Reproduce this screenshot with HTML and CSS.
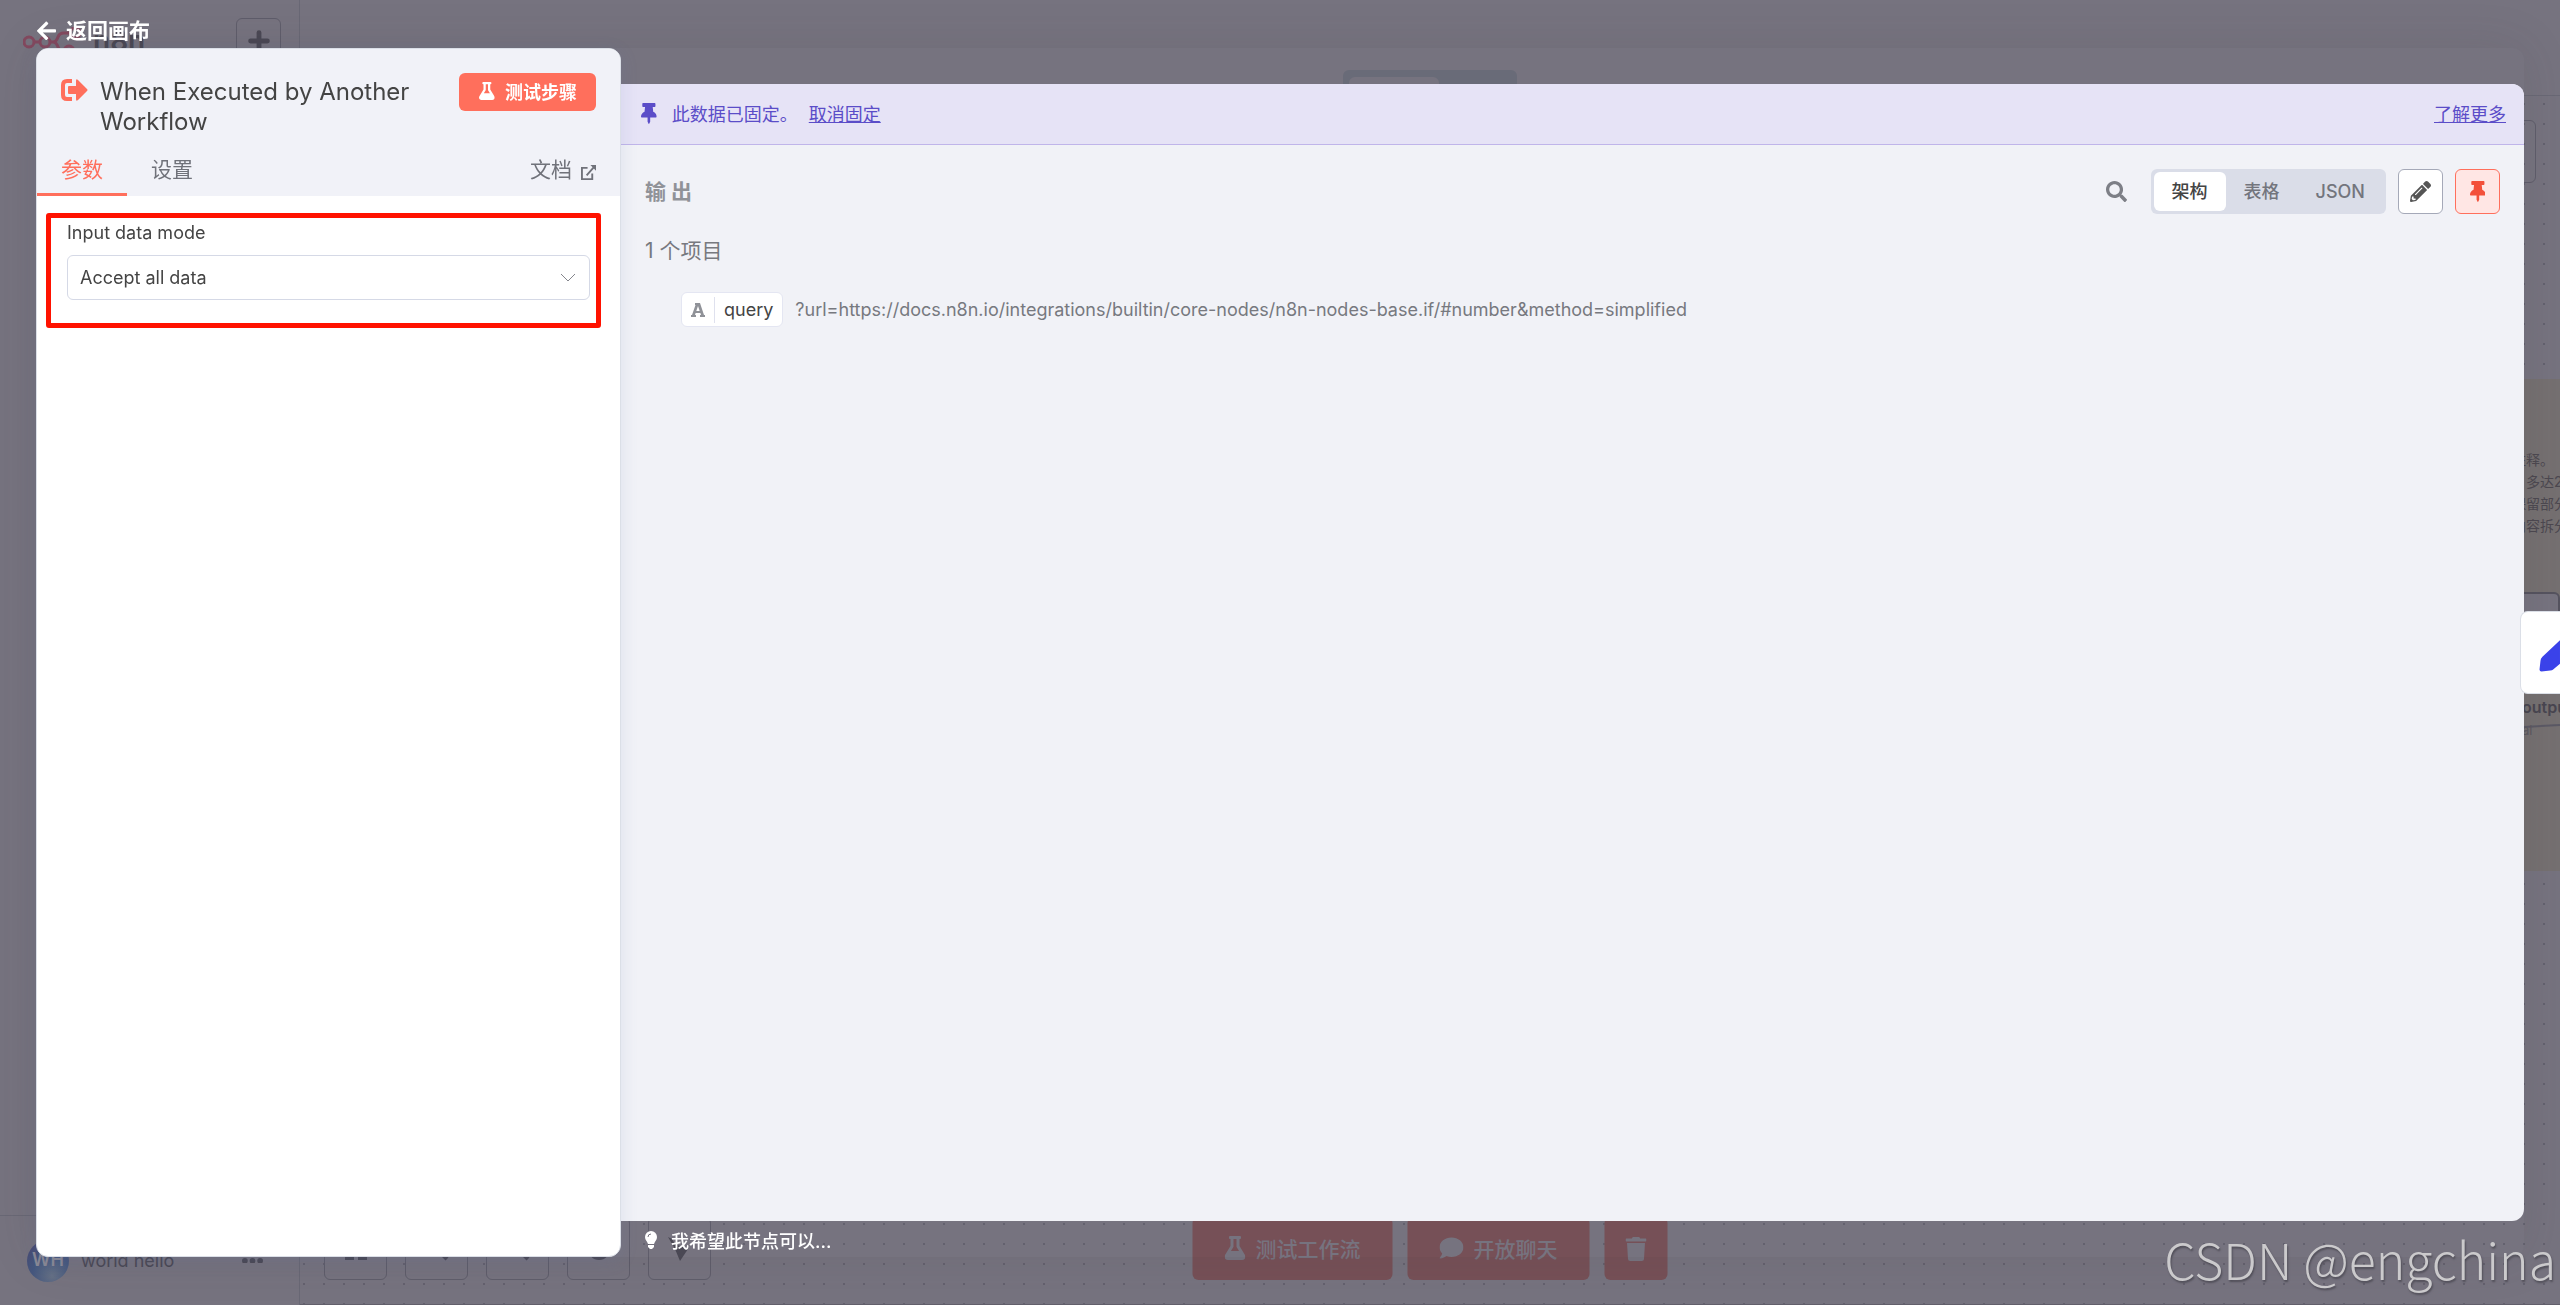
FILE: index.html
```
<!DOCTYPE html>
<html lang="zh-CN">
<head>
    <meta charset="UTF-8">
    <meta name="viewport" content="width=device-width, initial-scale=1.0">
    <title>n8n</title>
    <link rel="stylesheet" href="styles.css">
</head>
<body>
    <svg class="sprite" aria-hidden="true">
        <symbol id="flask" viewBox="0 0 448 512"><path d="M437.2 403.5L320 215V64h8c13.3 0 24-10.7 24-24V24c0-13.3-10.7-24-24-24H120c-13.3 0-24 10.7-24 24v16c0 13.3 10.7 24 24 24h8v151L10.8 403.5C-18.5 450.6 15.3 512 70.9 512h306.2c55.7 0 89.4-61.5 60.1-108.5zM137.9 320l48.2-77.6c3.7-5.2 5.8-11.6 5.8-18.4V64h64v160c0 6.9 2.2 13.2 5.8 18.4l48.2 77.6h-172z"/></symbol>
        <symbol id="pin" viewBox="0 0 384 512"><path d="M298 214.300L285.800 96H328c13.300 0 24-10.700 24-24V24c0-13.300-10.700-24-24-24H56C42.700 0 32 10.700 32 24v48c0 13.300 10.700 24 24 24h42.200L86 214.300C37.500 236.800 0 277.300 0 328c0 13.300 10.700 24 24 24h136v104c0 1.200.3 2.500.8 3.600l24 48c3 5.900 11.400 5.900 14.400 0l24-48c.5-1.100.8-2.400.8-3.600V352h136c13.300 0 24-10.700 24-24 0-51.200-38-91.400-86-113.700z"/></symbol>
    </svg>

    <div class="app">
        <aside class="sidebar">
            <div class="sidebar-top">
                <svg class="logo" viewBox="0 0 58 30" fill="none" stroke="currentColor" stroke-width="3">
                    <circle cx="6" cy="15" r="5"/>
                    <circle cx="22" cy="15" r="5"/>
                    <path d="M11 15h6M27 15h3c3 0 4-2 5-5s3-4 6-4h6M30 15c3 0 4 2 5 5s3 4 6 4"/>
                    <circle cx="52" cy="6" r="5"/>
                    <circle cx="46" cy="24" r="5"/>
                </svg>
                <span class="brand">n8n</span>
                <button class="add" aria-label="新建">
                    <svg viewBox="0 0 20 20" fill="none" stroke="currentColor" stroke-width="4" stroke-linecap="round"><path d="M10 3v14M3 10h14"/></svg>
                </button>
            </div>
            <div class="user">
                <span class="avatar">WH</span>
                <span class="user-name">world hello</span>
                <svg class="more" viewBox="0 0 22 6"><circle cx="3" cy="3" r="3"/><circle cx="11" cy="3" r="3"/><circle cx="19" cy="3" r="3"/></svg>
            </div>
        </aside>

        <main class="main">
            <header class="main-header">
                <div class="switcher"><span></span></div>
            </header>
            <div class="canvas">
                <div class="setup-card"></div>
                <div class="sticky">
                    <p>注释。</p>
                    <p>&#12288;多达2</p>
                    <p>保留部分</p>
                    <p>内容拆分</p>
                </div>
                <div class="frame"></div>
                <svg class="edge" viewBox="0 0 60 10" fill="none" stroke="currentColor" stroke-width="2"><path d="M0 8L24 6L60 4"/></svg>
                <div class="node-label">output</div>
                <div class="node-sub">al</div>
                <div class="node">
                    <svg viewBox="0 0 40 82"><path d="M40 29L22 46q-2 2-2 4l-1 9q0 2 2 2l9-1q2 0 3-1l7-6z"/></svg>
                </div>

                <div class="zoom-controls">
                    <button aria-label="适应视图"><svg viewBox="0 0 24 24"><path d="M1 1h9v4H5v5H1zM14 1h9v9h-4V5h-5zM1 14h4v5h5v4H1zM19 14h4v9h-9v-4h5z"/></svg></button>
                    <button aria-label="放大"><svg viewBox="0 0 24 24" fill="none" stroke="currentColor" stroke-width="4"><circle cx="9" cy="9" r="7"/><path d="M14 14l8 8"/></svg></button>
                    <button aria-label="缩小"><svg viewBox="0 0 24 24" fill="none" stroke="currentColor" stroke-width="4"><circle cx="9" cy="9" r="7"/><path d="M14 14l8 8"/></svg></button>
                    <button aria-label="重置"><svg viewBox="0 0 24 24"><circle cx="12" cy="12" r="11"/></svg></button>
                    <button aria-label="整理"><svg viewBox="0 0 24 24"><path d="M0 0l4 2 3 5 13 5-8 12L7 12z"/></svg></button>
                </div>

                <div class="run-controls">
                    <button><svg viewBox="0 0 448 512"><use href="#flask"/></svg>测试工作流</button>
                    <button><svg viewBox="0 0 512 512"><path d="M256 32C114.600 32 0 125.100 0 240c0 49.600 21.400 95 57 130.700C44.500 421.100 2.700 466 2.200 466.500c-2.200 2.300-2.800 5.700-1.500 8.700S4.800 480 8 480c66.300 0 116-31.800 140.600-51.400 32.700 12.300 69 19.400 107.400 19.400 141.400 0 256-93.100 256-208S397.400 32 256 32z"/></svg>开放聊天</button>
                    <button aria-label="删除"><svg viewBox="0 0 448 512"><path d="M432 32H312l-9.400-18.700A24 24 0 0 0 281.100 0H166.800a23.700 23.700 0 0 0-21.400 13.300L136 32H16A16 16 0 0 0 0 48v32a16 16 0 0 0 16 16h416a16 16 0 0 0 16-16V48a16 16 0 0 0-16-16zM53.200 467a48 48 0 0 0 47.900 45h245.800a48 48 0 0 0 47.900-45L416 128H32z"/></svg></button>
                </div>
            </div>
        </main>
    </div>

    <a class="back" href="#">
        <svg viewBox="0 0 448 512"><path d="M257.500 445.100l-22.200 22.200c-9.400 9.400-24.600 9.400-33.900 0L7 273c-9.400-9.400-9.400-24.600 0-33.900L201.400 44.700c9.400-9.400 24.600-9.400 33.900 0l22.200 22.200c9.500 9.500 9.300 25-.4 34.300L136.600 216H424c13.300 0 24 10.700 24 24v32c0 13.300-10.700 24-24 24H136.600l120.500 114.800c9.800 9.300 10 24.800.4 34.300z"/></svg>
        返回画布
    </a>

    <div class="ndv">
        <section class="params">
            <div class="params-header">
                <div class="title-row">
                    <svg class="node-icon" viewBox="0 0 27 22">
                        <path d="M11 2H6Q2 2 2 6v10q0 4 4 4h5" fill="none" stroke="currentColor" stroke-width="4"/>
                        <path d="M8 7h7V2q0-3 2-1l9 9q1 1 0 2l-9 9q-2 2-2-1v-5H8q-1 0-1-1V8q0-1 1-1z"/>
                    </svg>
                    <h1>When Executed by Another Workflow</h1>
                    <button class="test-step"><svg viewBox="0 0 448 512"><use href="#flask"/></svg>测试步骤</button>
                </div>
                <nav class="tabs">
                    <a class="tab active" href="#">参数</a>
                    <a class="tab" href="#">设置</a>
                    <a class="docs" href="#">文档
                        <svg viewBox="0 0 16 16" fill="none" stroke="currentColor" stroke-width="2"><path d="M7 3H1v12h11V9M6 11l8-9"/><path d="M10 0h6v6z" fill="currentColor" stroke="none"/></svg>
                    </a>
                </nav>
            </div>
            <div class="params-body">
                <div class="field">
                    <label for="mode">Input data mode</label>
                    <div class="select">
                        <select id="mode">
                            <option>Accept all data</option>
                        </select>
                        <svg viewBox="0 0 16 10" fill="none" stroke="currentColor"><path d="M1 1l7 7 7-7"/></svg>
                    </div>
                </div>
            </div>
        </section>

        <div class="right">
            <section class="output">
                <div class="pinned">
                    <svg viewBox="0 0 384 512"><use href="#pin"/></svg>
                    <span>此数据已固定。</span>
                    <a href="#">取消固定</a>
                    <a class="learn" href="#">了解更多</a>
                </div>
                <div class="output-header">
                    <h2>输出</h2>
                    <button class="search" aria-label="搜索"><svg viewBox="0 0 512 512"><path d="M505 442.700L405.300 343c-4.500-4.500-10.600-7-17-7H372c27.600-35.300 44-79.700 44-128C416 93.100 322.900 0 208 0S0 93.100 0 208s93.100 208 208 208c48.300 0 92.700-16.400 128-44v16.300c0 6.400 2.500 12.500 7 17l99.700 99.700c9.400 9.400 24.600 9.400 33.900 0l28.300-28.300c9.400-9.400 9.400-24.600.1-34zM208 336c-70.700 0-128-57.200-128-128 0-70.700 57.200-128 128-128 70.700 0 128 57.200 128 128 0 70.700-57.200 128-128 128z"/></svg></button>
                    <div class="views">
                        <label><input type="radio" name="view" checked><span>架构</span></label>
                        <label><input type="radio" name="view"><span>表格</span></label>
                        <label><input type="radio" name="view"><span>JSON</span></label>
                    </div>
                    <button class="square" aria-label="编辑"><svg viewBox="0 0 512 512"><path d="M497.900 142.100l-46.100 46.100c-4.700 4.700-12.300 4.700-17 0l-111-111c-4.700-4.700-4.700-12.300 0-17l46.100-46.100c18.700-18.700 49.100-18.700 67.900 0l60.100 60.100c18.800 18.700 18.800 49.100 0 67.900zM284.200 99.800L21.600 362.400.4 483.900c-2.900 16.400 11.400 30.600 27.800 27.800l121.500-21.300 262.600-262.600c4.700-4.700 4.700-12.300 0-17l-111-111c-4.800-4.700-12.400-4.700-17.100 0zM124.100 339.900c-5.500-5.500-5.500-14.300 0-19.800l154-154c5.500-5.500 14.300-5.500 19.800 0s5.500 14.300 0 19.800l-154 154c-5.500 5.500-14.300 5.500-19.800 0zM88 424h48v36.300l-64.500 11.300-31.100-31.100L51.700 376H88v48z"/></svg></button>
                    <button class="square on" aria-label="固定数据"><svg viewBox="0 0 384 512"><use href="#pin"/></svg></button>
                </div>
                <p class="count">1 个项目</p>
                <div class="schema-row">
                    <div class="pill">
                        <svg viewBox="0 0 14 14"><path d="M5 0h4l4 12h1v2H9v-2h1l-.6-2H4.600L4 12h1v2H0v-2h1L4.500 2H4V0zM5.300 8h3.400L7 3z"/></svg>
                        <span>query</span>
                    </div>
                    <span class="value">?url=https://docs.n8n.io/integrations/builtin/core-nodes/n8n-nodes-base.if/#number&amp;method=simplified</span>
                </div>
            </section>
            <a class="wish" href="#">
                <svg viewBox="0 0 12 18"><path d="M6 0a6 6 0 0 1 6 6c0 3-2 4-3 7H3C2 10 0 9 0 6a6 6 0 0 1 6-6zM3 14h6v2l-2 2H5l-2-2z"/><path d="M3 6q0-3 3-3" fill="none" stroke="#76737f"/></svg>
                我希望此节点可以...
            </a>
        </div>
    </div>

    <div class="watermark">CSDN @engchina</div>
</body>
</html>
```
FILE: styles.css
```
* {
    box-sizing: border-box;
}
body {
    margin: 0;
    height: 100vh;
    overflow: hidden;
    background: #76737f;
    color: #444;
    font-family: Inter, "Noto Sans CJK SC", sans-serif;
    font-size: 18px;
}
h1, h2, p {
    margin: 0;
}
a {
    color: inherit;
    text-decoration: none;
}
button {
    padding: 0;
    border: 0;
    background: none;
    color: inherit;
    font: inherit;
    cursor: pointer;
}
svg {
    display: block;
    flex: none;
    fill: currentColor;
}
svg[fill="none"] {
    fill: none;
}
.sprite {
    position: absolute;
    width: 0;
    height: 0;
}

/* dimmed app behind the dialog */
.app {
    display: flex;
    height: 100vh;
    color: #4a4854;
}
.sidebar {
    display: flex;
    flex-direction: column;
    justify-content: space-between;
    width: 300px;
    border-right: 1px solid #696875;
}
.sidebar-top {
    display: flex;
    align-items: flex-start;
    padding: 18px 18px 0 23px;
}
.logo {
    width: 58px;
    height: 30px;
    margin-top: 9px;
    color: #83495f;
}
.brand {
    margin: 6px auto 0 12px;
    font-size: 28px;
    font-weight: 600;
}
.add {
    display: flex;
    align-items: center;
    justify-content: center;
    width: 45px;
    height: 45px;
    border: 1px solid #5f5d6b;
    border-radius: 6px;
}
.add svg {
    width: 24px;
}
.user {
    display: flex;
    align-items: center;
    height: 90px;
    padding: 0 36px 0 27px;
    border-top: 1px solid #696875;
}
.avatar {
    width: 42px;
    height: 42px;
    margin-right: 12px;
    border-radius: 50%;
    background: radial-gradient(circle at 60% 85%, #667186, #45587f 45%, #48446f);
    color: #8b8a96;
    font-weight: 600;
    line-height: 40px;
    text-align: center;
}
.more {
    width: 21px;
    margin-left: auto;
}
.main {
    display: flex;
    flex: 1;
    flex-direction: column;
}
.main-header {
    display: flex;
    justify-content: center;
    height: 96px;
    padding-top: 70px;
    border-bottom: 1px solid #696875;
}
.switcher {
    width: 174px;
    height: 25px;
    padding: 7px 6px 0;
    border-radius: 6px 6px 0 0;
    background: #696b78;
}
.switcher span {
    display: block;
    width: 90px;
    height: 18px;
    border-radius: 6px 6px 0 0;
    background: #76737f;
}
.canvas {
    position: relative;
    flex: 1;
    border-bottom: 1px solid #625f6b;
    background: radial-gradient(circle, #63616e 1px, transparent 1px) 14px 18px / 20px 20px;
}
.setup-card {
    position: absolute;
    top: 24px;
    right: 24px;
    width: 60px;
    height: 63px;
    border: 1px solid #5f5d6b;
    border-radius: 6px;
}
.sticky {
    position: absolute;
    top: 283px;
    right: 0;
    width: 60px;
    height: 492px;
    padding: 70px 0 0 12px;
    background: #757071;
    color: #4c4850;
    font-size: 14px;
    line-height: 22px;
    white-space: nowrap;
    overflow: hidden;
}
.frame {
    position: absolute;
    top: 496px;
    right: 0;
    width: 60px;
    height: 60px;
    border: 2px solid #55535f;
    border-radius: 6px;
    background: #76737f;
}
.edge {
    position: absolute;
    top: 625px;
    right: 0;
    width: 60px;
    color: #5b5965;
}
.node-label, .node-sub {
    position: absolute;
    top: 601px;
    left: calc(100% - 38px);
    color: #484550;
    font-size: 16px;
    font-weight: 600;
    line-height: 20px;
}
.node-sub {
    top: 624px;
    color: #5b5860;
    font-size: 13px;
    font-weight: 400;
}
.node {
    position: absolute;
    z-index: 3;
    top: 515px;
    right: 0;
    width: 40px;
    height: 83px;
    border: 1px solid #dbdfe7;
    border-right: 0;
    border-radius: 8px 0 0 8px;
    background: #fff;
    color: #3a42e9;
}
.zoom-controls, .run-controls {
    position: absolute;
    bottom: 24px;
    display: flex;
}
.zoom-controls {
    left: 24px;
    gap: 18px;
}
.zoom-controls button {
    display: flex;
    align-items: center;
    justify-content: center;
    width: 63px;
    height: 63px;
    border: 1px solid #5f5d6b;
    border-radius: 6px;
    background: #76737f;
}
.zoom-controls svg {
    width: 24px;
}
.run-controls {
    left: 50%;
    gap: 15px;
    transform: translateX(-50%);
}
.run-controls button {
    display: flex;
    align-items: center;
    gap: 10px;
    height: 63px;
    padding: 0 32px 2px;
    border-radius: 6px;
    background: #765057;
    color: #76737f;
    font-size: 21px;
    font-weight: 500;
    white-space: nowrap;
}
.run-controls button:last-child {
    padding: 0 21px;
}
.run-controls svg {
    height: 24px;
}

/* node detail view */
.back {
    position: fixed;
    z-index: 1;
    top: 16px;
    left: 37px;
    display: flex;
    align-items: center;
    gap: 10px;
    color: #fff;
    font-size: 21px;
    font-weight: 600;
    line-height: 30px;
}
.back svg {
    width: 19px;
}
.ndv {
    position: fixed;
    inset: 48px 36px;
    display: flex;
    border-radius: 12px;
    box-shadow: 0 0 50px rgba(68, 56, 60, 0.12);
}
.params {
    z-index: 1;
    flex: none;
    width: 585px;
    border: 1px solid #dbdfe7;
    border-radius: 12px;
    background: #fff;
    box-shadow: 0 4px 18px rgba(99, 119, 180, 0.14);
    overflow: hidden;
}
.params-header {
    background: #f1f2f8;
}
.title-row {
    display: flex;
    align-items: flex-start;
    padding: 24px 24px 0;
}
.node-icon {
    width: 27px;
    margin: 6px 12px 0 0;
    color: #ff6f5c;
}
h1 {
    flex: 1;
    padding-top: 4px;
    font-size: 24px;
    font-weight: 400;
    line-height: 30px;
}
.test-step {
    display: flex;
    align-items: center;
    gap: 10px;
    height: 38px;
    padding: 0 19px 2px 20px;
    border-radius: 6px;
    background: #ff6f5c;
    color: #fff;
    font-weight: 600;
}
.test-step svg {
    height: 18px;
}
.tabs {
    display: flex;
    padding-top: 9px;
    color: #70727a;
    font-size: 21px;
    line-height: 30px;
}
.tab {
    height: 50px;
    padding: 9px 24px 0;
}
.tab.active {
    border-bottom: 3px solid #ff6f5c;
    color: #ff6f5c;
}
.docs {
    display: flex;
    align-items: center;
    gap: 9px;
    height: 50px;
    margin-left: auto;
    padding: 0 24px 2px 0;
}
.docs svg {
    width: 15px;
    margin-top: 4px;
}
.params-body {
    padding: 17px 19px 0 9px;
}
.field {
    height: 115px;
    padding: 3px 5px 0 15px;
    border: 5px solid #ff1200;
    border-radius: 3px;
}
.field label {
    display: block;
    margin: 0 1px 10px;
    line-height: 24px;
}
.select {
    position: relative;
    margin: 0 1px;
}
.select select {
    display: block;
    width: 100%;
    height: 45px;
    padding: 0 45px 1px 12px;
    border: 1px solid #d5d9e6;
    border-radius: 6px;
    background: #fff;
    color: #444;
    font: inherit;
    appearance: none;
}
.select svg {
    position: absolute;
    top: 18px;
    right: 14px;
    width: 16px;
    color: #84858c;
    pointer-events: none;
}
.right {
    display: flex;
    flex: 1;
    flex-direction: column;
    padding-top: 36px;
}
.output {
    flex: 1;
    border-radius: 0 12px 12px 0;
    background: #f1f2f7;
    overflow: hidden;
}
.pinned {
    display: flex;
    align-items: center;
    height: 61px;
    padding: 0 18px 2px 20px;
    border-bottom: 1px solid #c0b5ea;
    background: #e6e3f6;
    color: #5b4dc8;
}
.pinned svg {
    height: 21px;
    margin-right: 15px;
}
.pinned a {
    margin-left: 11px;
    text-decoration: underline;
}
.pinned .learn {
    margin-left: auto;
}
.output-header {
    display: flex;
    align-items: center;
    gap: 12px;
    padding: 24px 24px 0;
    color: #7d7f86;
}
h2 {
    margin-right: auto;
    padding-bottom: 4px;
    color: #909298;
    font-size: 21px;
    font-weight: 600;
    letter-spacing: 5px;
}
.search {
    margin-right: 12px;
}
.search svg {
    width: 21px;
}
.views {
    display: flex;
    height: 45px;
    padding: 3px;
    border-radius: 6px;
    background: #dadde8;
    color: #73757d;
    font-weight: 500;
}
.views input {
    position: absolute;
    opacity: 0;
}
.views span {
    display: block;
    padding: 0 18px;
    border-radius: 6px;
    line-height: 39px;
}
.views input:checked + span {
    background: #fff;
    color: #444;
}
.square {
    display: flex;
    align-items: center;
    justify-content: center;
    width: 45px;
    height: 45px;
    border: 1px solid #a5a9b8;
    border-radius: 6px;
    background: #fff;
    color: #555;
}
.square svg {
    height: 21px;
}
.square.on {
    border-color: #ff6f5c;
    background: #ffe6e4;
    color: #f3503a;
}
.count {
    padding: 22px 24px 0;
    color: #77797f;
    font-size: 21px;
    line-height: 30px;
}
.schema-row {
    display: flex;
    align-items: center;
    gap: 12px;
    padding: 26px 24px 0 60px;
}
.pill {
    display: flex;
    align-items: center;
    height: 35px;
    border: 1px solid #e4e6f2;
    border-radius: 6px;
    background: #fff;
}
.pill svg {
    width: 14px;
    margin: 0 9px;
    color: #909298;
}
.pill span {
    padding: 0 9px;
    border-left: 1px solid #dfe1ee;
    line-height: 26px;
}
.value {
    color: #77797f;
}
.wish {
    display: flex;
    align-items: center;
    gap: 14px;
    height: 36px;
    padding: 2px 0 0 24px;
    color: #fff;
    font-weight: 500;
}
.wish svg {
    width: 12px;
}

.watermark {
    position: fixed;
    z-index: 4;
    right: 4px;
    bottom: 11px;
    color: #cbcacc;
    font-family: "Noto Sans CJK SC", sans-serif;
    font-size: 50px;
    font-weight: 300;
    line-height: 72px;
    text-shadow: 1px 2px 2px #504e58;
}
```
